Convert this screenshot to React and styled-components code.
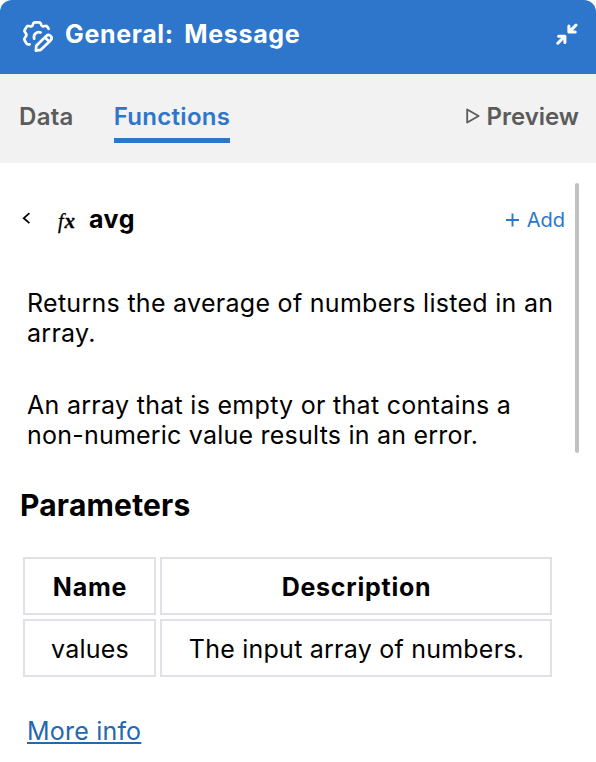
import React from 'react';
import styled, { createGlobalStyle } from 'styled-components';

const Global = createGlobalStyle`
  * { box-sizing: border-box; }
  body { margin: 0; background: #fff; }
  h1, h2, h3, p { margin: 0; }
`;

const Panel = styled.main`
  width: 596px;
  height: 762px;
  overflow: hidden;
  background: #fff;
  color: #000;
  font-family: Inter, 'Liberation Sans', sans-serif;
`;

const Header = styled.header`
  display: flex;
  align-items: center;
  height: 74px;
  padding: 0 17px 0 20px;
  border-radius: 12px 12px 0 0;
  background: #2d76cb;
  color: #fff;
`;

const Title = styled.h1`
  flex: 1;
  margin: -6px 0 0 9px;
  font-size: 25px;
  font-weight: 700;
  line-height: 30px;
  letter-spacing: 0.65px;
  word-spacing: 4px;
`;

const Tabs = styled.nav`
  display: flex;
  height: 89px;
  padding: 24px 17px 0 19px;
  background: #f2f2f2;
`;

const Tab = styled.div`
  height: 45px;
  margin-right: 40px;
  border-bottom: 5px solid ${(p) => (p.$active ? '#2d76cb' : 'transparent')};
  color: ${(p) => (p.$active ? '#2d76cb' : '#5b5b5b')};
  font-size: 24px;
  font-weight: 600;
  line-height: 38px;
  letter-spacing: 0.3px;
`;

const Preview = styled.div`
  display: flex;
  align-items: center;
  gap: 6px;
  height: 36px;
  margin-left: auto;
  color: #5b5b5b;
  font-size: 24px;
  font-weight: 600;
`;

const Content = styled.div`
  display: flex;
  padding: 20px 17px 0 20px;
`;

const Doc = styled.section`
  flex: 1;
  height: 270px;
`;

const Scrollbar = styled.div`
  width: 4px;
  height: 270px;
  margin-left: 10px;
  border-radius: 3px;
  background: #c1c1c1;
`;

const FunctionBar = styled.div`
  display: flex;
  align-items: center;
  height: 72px;
`;

const Fx = styled.span`
  width: 20px;
  margin: 3px 0 0 26px;
  font: italic 20px/24px 'Liberation Serif', serif;
  letter-spacing: 1px;
  -webkit-text-stroke: 0.3px currentColor;

  b {
    font-size: 21px;
  }
`;

const FunctionName = styled.h2`
  flex: 1;
  margin-left: 11px;
  font-size: 25px;
  font-weight: 700;
  line-height: 30px;
  letter-spacing: 0.5px;
`;

const Add = styled.div`
  display: flex;
  align-items: center;
  gap: 8px;
  margin-top: 2px;
  color: #2d76cb;
  font-size: 20px;
  line-height: 24px;
`;

const Paragraph = styled.p`
  margin: ${(p) => p.$top} 0 0 7px;
  font-size: 25px;
  line-height: 30px;
  letter-spacing: 0.29px;
  white-space: nowrap;
`;

const TightLine = styled.span`
  letter-spacing: 0.22px;
`;

const Heading = styled.h3`
  margin: 34px 0 0 20px;
  font-size: 30px;
  font-weight: 700;
  line-height: 36px;
  letter-spacing: 0.2px;
`;

const Grid = styled.div`
  display: grid;
  grid-template-columns: 133px 392px;
  grid-auto-rows: 58px;
  gap: 4px;
  margin: 34px 0 0 23px;
`;

const Cell = styled.div`
  display: flex;
  align-items: center;
  justify-content: center;
  padding: 2px 0 0 1px;
  border: 2px solid #e0e0e6;
  font-size: 25px;
  font-weight: ${(p) => (p.$head ? 700 : 400)};
  line-height: 30px;
  letter-spacing: ${(p) => (p.$head ? '0.75px' : '0.23px')};
  white-space: nowrap;
`;

const MoreInfo = styled.a`
  display: inline-block;
  margin: 39px 0 0 27px;
  color: #2468b0;
  font-size: 25px;
  line-height: 30px;
  letter-spacing: 0.2px;
  text-decoration: underline;
  text-decoration-thickness: 2px;
  text-underline-offset: 2px;
`;

const GearPencilIcon = () => (
  <svg width="36" height="36" viewBox="20 19 36 36" fill="none" stroke="currentColor" strokeWidth="2.7" strokeLinecap="round" strokeLinejoin="round">
    <path d="M48.6 28.8 L47.4 26.9 Q46.6 25.8 45.3 26 L42.8 26.4 Q41.8 26 41.3 25 L40.8 23.6 Q40.3 22.4 39 22.4 H35 Q33.7 22.4 33.2 23.6 L32.6 25.2 Q32 26.2 31 26.5 L28.6 26 Q27.3 25.8 26.6 26.9 L24.7 30 Q24 31.2 24.9 32.2 L26.2 33.8 Q26.7 34.8 26.2 35.8 L24.7 38 Q23.9 39 24.6 40.2 L26.4 43.4 Q27.1 44.6 28.4 44.5 L29.6 44.4" />
    <path d="M40.6 32.4 A5 5 0 0 0 34.2 38.7" />
    <path d="M35.9 50.7 L36.3 45.8 L46.3 35.9 Q48.6 33.9 50.7 36 Q52.6 38 50.8 40.2 L40.8 49.8 Z M45.3 37.8 L48.9 41.3" />
  </svg>
);

const CollapseIcon = () => (
  <svg width="24" height="28" viewBox="555 23 24 28" fill="none" stroke="currentColor" strokeWidth="3" strokeLinecap="round" strokeLinejoin="round">
    <path d="M576 25.1 L569.5 31.6 M568.9 26 V32 H575.2 M557.8 43.2 L564.3 36.7 M558.6 36.3 H564.9 V42.4" />
  </svg>
);

const PlayIcon = () => (
  <svg width="14" height="16" viewBox="0 0 14 16" fill="none" stroke="currentColor" strokeWidth="1.8" strokeLinejoin="round">
    <path d="M1.2 1.5 L12.6 8 L1.2 14.5 Z" />
  </svg>
);

const BackIcon = () => (
  <svg width="12" height="14" viewBox="0 0 12 14" fill="none" stroke="currentColor" strokeWidth="1.8">
    <path d="M9.4 1.2 L3.8 6.2 L9.4 11.2" />
  </svg>
);

const PlusIcon = () => (
  <svg width="14" height="14" viewBox="0 0 14 14" stroke="currentColor" strokeWidth="1.9">
    <path d="M7.5 0.5 V13.5 M1 7 H14" />
  </svg>
);

export default function App() {
  return (
    <Panel>
      <Global />
      <Header>
        <GearPencilIcon />
        <Title>General: Message</Title>
        <CollapseIcon />
      </Header>
      <Tabs>
        <Tab>Data</Tab>
        <Tab $active>Functions</Tab>
        <Preview><PlayIcon />Preview</Preview>
      </Tabs>
      <Content>
        <Doc>
          <FunctionBar>
            <BackIcon />
            <Fx>f<b>x</b></Fx>
            <FunctionName>avg</FunctionName>
            <Add><PlusIcon />Add</Add>
          </FunctionBar>
          <Paragraph $top="33px">Returns the average of numbers listed in an<br />array.</Paragraph>
          <Paragraph $top="42px">An array that is empty or that contains a<br /><TightLine>non-numeric value results in an error.</TightLine></Paragraph>
        </Doc>
        <Scrollbar />
      </Content>
      <Heading>Parameters</Heading>
      <Grid>
        <Cell $head>Name</Cell>
        <Cell $head>Description</Cell>
        <Cell>values</Cell>
        <Cell>The input array of numbers.</Cell>
      </Grid>
      <MoreInfo>More info</MoreInfo>
    </Panel>
  );
}
